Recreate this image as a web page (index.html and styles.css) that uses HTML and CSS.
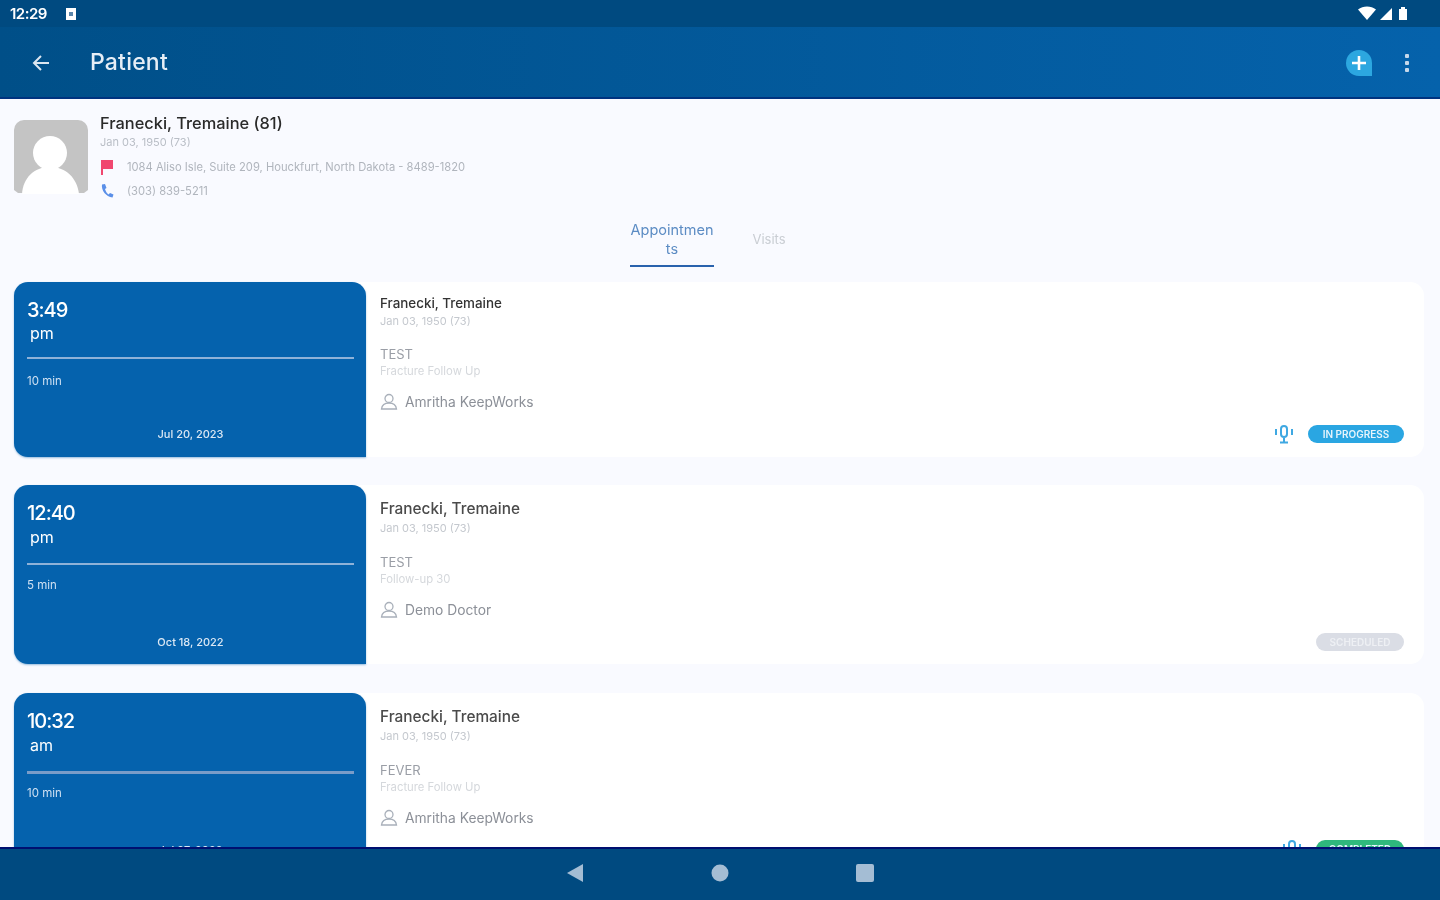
FILE: index.html
```html
<!DOCTYPE html>
<html lang="en">
<head>
<meta charset="utf-8">
<title>Patient</title>
<link rel="stylesheet" href="styles.css">
</head>
<body>
<div class="app">
  <header class="top">
    <div class="status">
      <span class="clock">12:29</span>
      <svg class="sim" width="12" height="14" viewBox="0 0 12 14"><path d="M1 1h10v12H1z" fill="#fff"/><rect x="4" y="5" width="4" height="4" fill="#5b86ab"/></svg>
      <span class="grow"></span>
      <svg width="52" height="16" viewBox="0 0 52 16"><path d="M0 3.500C5-.5 13-.5 18 3.500L9 14z" fill="#fff"/><path d="M22 14 34 2v12z" fill="#fff"/><path d="M41 3h2V1h4v2h2v11h-8z" fill="#fff"/></svg>
    </div>
    <div class="toolbar">
      <svg class="back" width="20" height="20" viewBox="0 0 20 20"><path d="M18 10H3M10 3l-7 7 7 7" fill="none" stroke="#dbe6f0" stroke-width="2"/></svg>
      <h1 class="title">Patient</h1>
      <span class="grow"></span>
      <svg class="add" width="28" height="28" viewBox="0 0 28 28"><path d="M14 1a13 13 0 1 0 0 26h13V14A13 13 0 0 0 14 1z" fill="#2ca7e0"/><path d="M14 7v14M7 14h14" stroke="#fff" stroke-width="2.600"/></svg>
      <svg class="more" width="6" height="20" viewBox="0 0 6 20"><rect x="1" y="1" width="4" height="4" rx="1" fill="#c6d8ea"/><rect x="1" y="8" width="4" height="4" rx="1" fill="#c6d8ea"/><rect x="1" y="15" width="4" height="4" rx="1" fill="#c6d8ea"/></svg>
    </div>
  </header>

  <main class="content">
    <section class="patient">
      <svg class="avatar" width="74" height="74" viewBox="0 0 74 74"><path d="M10 0h54a10 10 0 0 1 10 10v60l-4 3H4l-4-3V10A10 10 0 0 1 10 0z" fill="#c4c4c4"/><circle cx="36" cy="33" r="17" fill="#fff"/><path d="M8 74c1-16 12-27 28-27s27 11 29 27z" fill="#fff"/></svg>
      <div class="info">
        <div class="pname">Franecki, Tremaine (81)</div>
        <div class="dob">Jan 03, 1950 (73)</div>
        <div class="line">
          <svg width="14" height="16" viewBox="0 0 14 16"><path d="M1 1h12v9H3v6H1z" fill="#f0476f"/></svg>
          <span>1084 Aliso Isle, Suite 209, Houckfurt, North Dakota - 8489-1820</span>
        </div>
        <div class="line">
          <svg width="14" height="16" viewBox="0 0 14 16"><path d="M2 1.500C1 7 6 14 12.500 14.500l1-3-3.500-1.500-1.500 1.500C7 10.500 5.500 8 5 6l1.500-1L5 1z" fill="#5b8fe8"/></svg>
          <span>(303) 839-5211</span>
        </div>
      </div>
    </section>

    <nav class="tabs">
      <div class="tab active">Appointmen<br>ts</div>
      <div class="tab">Visits</div>
    </nav>

    <article class="card small">
      <div class="when">
        <div class="time">3:49</div>
        <div class="ampm">pm</div>
        <div class="rule"></div>
        <div class="dur">10 min</div>
        <div class="date">Jul 20, 2023</div>
      </div>
      <div class="detail">
        <div class="name">Franecki, Tremaine</div>
        <div class="sub">Jan 03, 1950 (73)</div>
        <div class="reason">TEST</div>
        <div class="kind">Fracture Follow Up</div>
        <div class="doc">
          <svg class="person" width="18" height="18" viewBox="0 0 18 18"><circle cx="9" cy="5.500" r="4" fill="none" stroke="#a9b0ba" stroke-width="1.300"/><path d="M1.500 16c.5-4 3-6 7.500-6s7 2 7.500 6z" fill="none" stroke="#a9b0ba" stroke-width="1.300"/></svg>
          <span>Amritha KeepWorks</span>
        </div>
        <div class="foot">
          <svg class="mic" width="22" height="20" viewBox="0 0 22 20"><rect x="8" y="2" width="6" height="11" rx="3" fill="none" stroke="#3fa8e2" stroke-width="2"/><path d="M11 14v4M7 18.500h8M3 5v6M19 5v6" stroke="#3fa8e2" stroke-width="2"/></svg>
          <span class="pill blue">IN PROGRESS</span>
        </div>
      </div>
    </article>

    <article class="card">
      <div class="when">
        <div class="time">12:40</div>
        <div class="ampm">pm</div>
        <div class="rule"></div>
        <div class="dur">5 min</div>
        <div class="date">Oct 18, 2022</div>
      </div>
      <div class="detail">
        <div class="name">Franecki, Tremaine</div>
        <div class="sub">Jan 03, 1950 (73)</div>
        <div class="reason">TEST</div>
        <div class="kind">Follow-up 30</div>
        <div class="doc">
          <svg class="person" width="18" height="18" viewBox="0 0 18 18"><circle cx="9" cy="5.500" r="4" fill="none" stroke="#a9b0ba" stroke-width="1.300"/><path d="M1.500 16c.5-4 3-6 7.500-6s7 2 7.500 6z" fill="none" stroke="#a9b0ba" stroke-width="1.300"/></svg>
          <span>Demo Doctor</span>
        </div>
        <div class="foot">
          <span class="pill grey">SCHEDULED</span>
        </div>
      </div>
    </article>

    <article class="card">
      <div class="when">
        <div class="time">10:32</div>
        <div class="ampm">am</div>
        <div class="rule thick"></div>
        <div class="dur">10 min</div>
        <div class="date">Jul 07, 2022</div>
      </div>
      <div class="detail">
        <div class="name">Franecki, Tremaine</div>
        <div class="sub">Jan 03, 1950 (73)</div>
        <div class="reason">FEVER</div>
        <div class="kind">Fracture Follow Up</div>
        <div class="doc">
          <svg class="person" width="18" height="18" viewBox="0 0 18 18"><circle cx="9" cy="5.500" r="4" fill="none" stroke="#a9b0ba" stroke-width="1.300"/><path d="M1.500 16c.5-4 3-6 7.500-6s7 2 7.500 6z" fill="none" stroke="#a9b0ba" stroke-width="1.300"/></svg>
          <span>Amritha KeepWorks</span>
        </div>
        <div class="foot">
          <svg class="mic" width="22" height="20" viewBox="0 0 22 20"><rect x="8" y="2" width="6" height="11" rx="3" fill="none" stroke="#3fa8e2" stroke-width="2"/><path d="M11 14v4M7 18.500h8M3 5v6M19 5v6" stroke="#3fa8e2" stroke-width="2"/></svg>
          <span class="pill green">COMPLETED</span>
        </div>
      </div>
    </article>
  </main>

  <footer class="navbar">
    <svg width="18" height="20" viewBox="0 0 18 20"><path d="M1 10 17 1v18z" fill="#a4bdd4"/></svg>
    <svg width="18" height="18" viewBox="0 0 18 18"><circle cx="9" cy="9" r="8.500" fill="#a4bdd4"/></svg>
    <svg width="18" height="18" viewBox="0 0 18 18"><rect width="18" height="18" rx="2" fill="#a4bdd4"/></svg>
  </footer>
</div>
</body>
</html>
```
FILE: styles.css
```css
* { box-sizing: border-box; }
html, body { margin: 0; height: 100%; }
body { font-family: "Inter", "Noto Sans", sans-serif; background: #f9faff; color: #333; overflow: hidden; }
.app { height: 900px; width: 1440px; display: flex; flex-direction: column; overflow: hidden; }
.grow { flex: 1; }

.top { height: 99px; flex: none; border-bottom: 2px solid #00337f; background: linear-gradient(90deg, #004f88 0%, #0562ab 100%); }
.status { height: 27px; display: flex; align-items: center; padding: 0 30px 0 10px; background: #004a80; color: #fff; }
.clock { font-size: 15px; font-weight: 600; width: 55px; letter-spacing: -.5px; filter: blur(.4px); }
.toolbar { height: 70px; display: flex; align-items: center; padding: 0 30px 0 31px; }
.back { margin-right: 39px; margin-top: 1px; }
.title { margin: 0; font-size: 23px; font-weight: 500; color: #e6eef6; filter: blur(.4px); letter-spacing: .2px; }
.add { margin-top: 1px; margin-right: 31px; }
.more { margin-top: 1px; }

.content { flex: 1; min-height: 0; overflow: hidden; padding: 21px 16px 0 14px; }

.patient { display: flex; height: 100px; }
.avatar { margin-right: 12px; flex: none; filter: blur(.5px); }
.info { filter: blur(.5px); }
.pname { font-size: 16.400px; font-weight: 500; color: #2a2a2a; line-height: 20px; margin-top: -7px; }
.dob { font-size: 11px; color: #b9bec6; line-height: 18px; margin-bottom: 4px; }
.line { display: flex; align-items: center; gap: 13px; height: 24px; font-size: 11.200px; color: #b0b5bd; }

.tabs { display: flex; justify-content: center; align-items: flex-start; margin: -1px 0 14px; height: 49px; gap: 25px; }
.tab { width: 60px; height: 49px; text-align: center; font-size: 13px; line-height: 19px; color: #c9cdd3; filter: blur(.4px); display: flex; align-items: center; justify-content: center; padding: 0 0 8px; }
.tab.active { width: 84px; height: 48px; font-size: 14.500px; color: #5c8cc4; border-bottom: 2px solid #2a62ad; padding-bottom: 7px; }
.tab:last-child { margin-right: 9px; }

.card { display: flex; height: 179px; margin-bottom: 29px; background: #fff; border-radius: 14px; }
.card.small { height: 175px; margin-bottom: 28px; }
.when { width: 352px; flex: none; background: #0562ad; border-radius: 14px 14px 0 14px; padding: 13px 12px 13px 13px; color: #fff; display: flex; flex-direction: column; box-shadow: 0 1px 2px rgba(5,98,173,.4); }
.time { font-size: 20px; font-weight: 500; line-height: 30px; letter-spacing: -1px; filter: blur(.4px); }
.ampm { font-size: 16px; line-height: 18px; padding-left: 3px; filter: blur(.4px); }
.small .ampm { margin-top: -1px; }
.rule { height: 2px; margin: 17px 0 0; background: #8fb2d8; flex: none; }
.small .rule { margin-top: 15px; }
.rule.thick { height: 3px; background: #7a9cc8; }
.dur { font-size: 11.500px; line-height: 16px; margin-top: 12px; color: #cfe0f2; filter: blur(.4px); }
.small .dur { margin-top: 14px; }
.rule.thick + .dur { margin-top: 11px; }
.date { font-size: 11px; font-weight: 500; line-height: 16px; text-align: center; color: #dce8f4; margin-top: auto; margin-bottom: 1px; filter: blur(.4px); }
.small .date { margin-bottom: 2px; }

.detail { flex: 1; position: relative; padding: 13px 14px 0; display: flex; flex-direction: column; }
.small .detail { padding-top: 12px; }
.name { font-size: 15.400px; font-weight: 500; line-height: 22px; color: #4a4a4a; filter: blur(.4px); }
.small .name { font-size: 13.400px; line-height: 18px; color: #333; }
.sub { font-size: 11px; line-height: 18px; margin-top: -1px; color: #c4c8ce; filter: blur(.5px); }
.small .sub { margin-top: 0; }
.reason { font-size: 13px; line-height: 18px; color: #9a9ea6; margin-top: 16px; filter: blur(.4px); }
.kind { font-size: 11.300px; line-height: 16px; color: #d5d8dc; filter: blur(.5px); }
.doc { display: flex; align-items: center; gap: 7px; font-size: 13.800px; color: #8c9098; margin-top: 13px; height: 20px; filter: blur(.4px); }
.small .reason { margin-top: 15px; }
.foot { position: absolute; right: 20px; bottom: 13px; display: flex; align-items: center; gap: 13px; }
.pill { display: block; height: 18px; border-radius: 9px; width: 96px; font-size: 10px; font-weight: 600; line-height: 18px; text-align: center; color: #e6f4fc; filter: blur(.4px); }
.pill.blue { background: #2aa6e2; }
.pill.grey { width: 88px; background: #dadde5; color: #eef0f4; }
.pill.green { width: 88px; background: #2fb87d; }

.navbar { height: 53px; flex: none; display: flex; align-items: center; justify-content: center; gap: 127px; background: #004a80; border-top: 2px solid #000f70; padding-bottom: 3px; z-index: 1; }
```
